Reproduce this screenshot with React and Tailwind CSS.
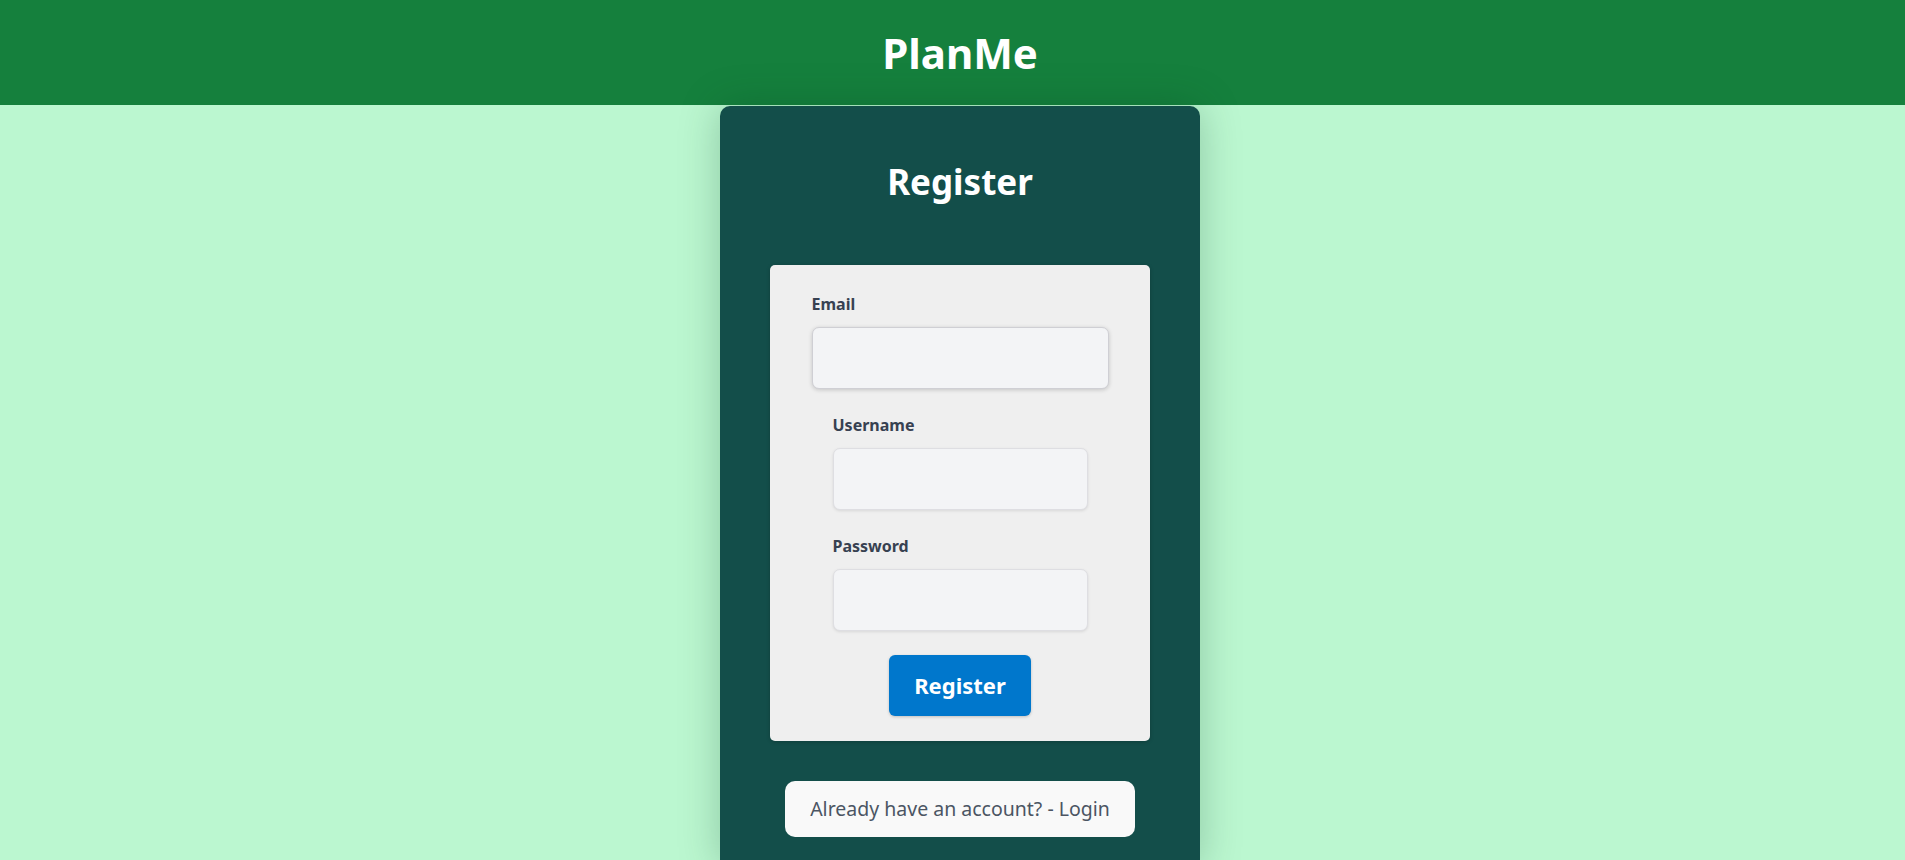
import { useState } from "react";

function Field({ label, type, value, onChange, wide }) {
  return (
    <div className="flex flex-col">
      <label className="text-[16px] leading-[24px] font-bold text-[#374151]">{label}</label>
      <input
        type={type}
        value={value}
        onChange={onChange}
        className={`mt-[11px] h-[62px] rounded-[7px] bg-[#f3f4f6] outline-none px-3 text-[18px] ${
          wide
            ? "w-[297px] border border-[#cfcfd4] shadow-[0_1px_4px_rgba(0,0,0,0.18)]"
            : "w-[255px] border border-[#dedee2] shadow-[0_1px_3px_rgba(0,0,0,0.1)]"
        }`}
      />
    </div>
  );
}

export default function App() {
  const [email, setEmail] = useState("");
  const [username, setUsername] = useState("");
  const [password, setPassword] = useState("");

  return (
    <div className="h-screen w-full overflow-hidden bg-[#bbf7d0] font-['Noto_Sans','Open_Sans',sans-serif]">
      {/* page was laid out at 1920 wide */}
      <div className="w-[1920px] h-full">
        <header className="h-[105px] bg-[#15803d] flex items-center justify-center">
          <h1 className="text-white text-[42px] leading-[48px] font-bold">PlanMe</h1>
        </header>
        <main className="mx-auto mt-px w-[480px] h-[760px] bg-[#134e4a] rounded-t-[10px] shadow-[0_0_40px_rgba(0,60,30,0.25)] flex flex-col items-center">
          <h2 className="mt-[52px] text-white text-[35px] leading-[48px] font-bold">Register</h2>
          <form
            className="mt-[59px] w-[380px] bg-[#efefef] rounded-[5px] shadow-[0_1px_4px_rgba(0,0,0,0.2)] pt-[27px] pb-[25px] flex flex-col items-center gap-[24px]"
            onSubmit={(e) => e.preventDefault()}
          >
            <Field label="Email" type="email" value={email} onChange={(e) => setEmail(e.target.value)} wide />
            <Field label="Username" type="text" value={username} onChange={(e) => setUsername(e.target.value)} />
            <Field label="Password" type="password" value={password} onChange={(e) => setPassword(e.target.value)} />
            <button
              type="submit"
              className="w-[142px] h-[61px] rounded-[6px] bg-[#0077cc] text-white text-[22px] font-bold shadow-[0_1px_3px_rgba(0,0,0,0.2)]"
            >
              Register
            </button>
          </form>
          <div className="mt-[40px] w-[350px] h-[56px] rounded-[10px] bg-[#f9f9f9] flex items-center justify-center text-[19.5px] text-[#4b5563] cursor-pointer">
            Already have an account? - Login
          </div>
        </main>
      </div>
    </div>
  );
}
